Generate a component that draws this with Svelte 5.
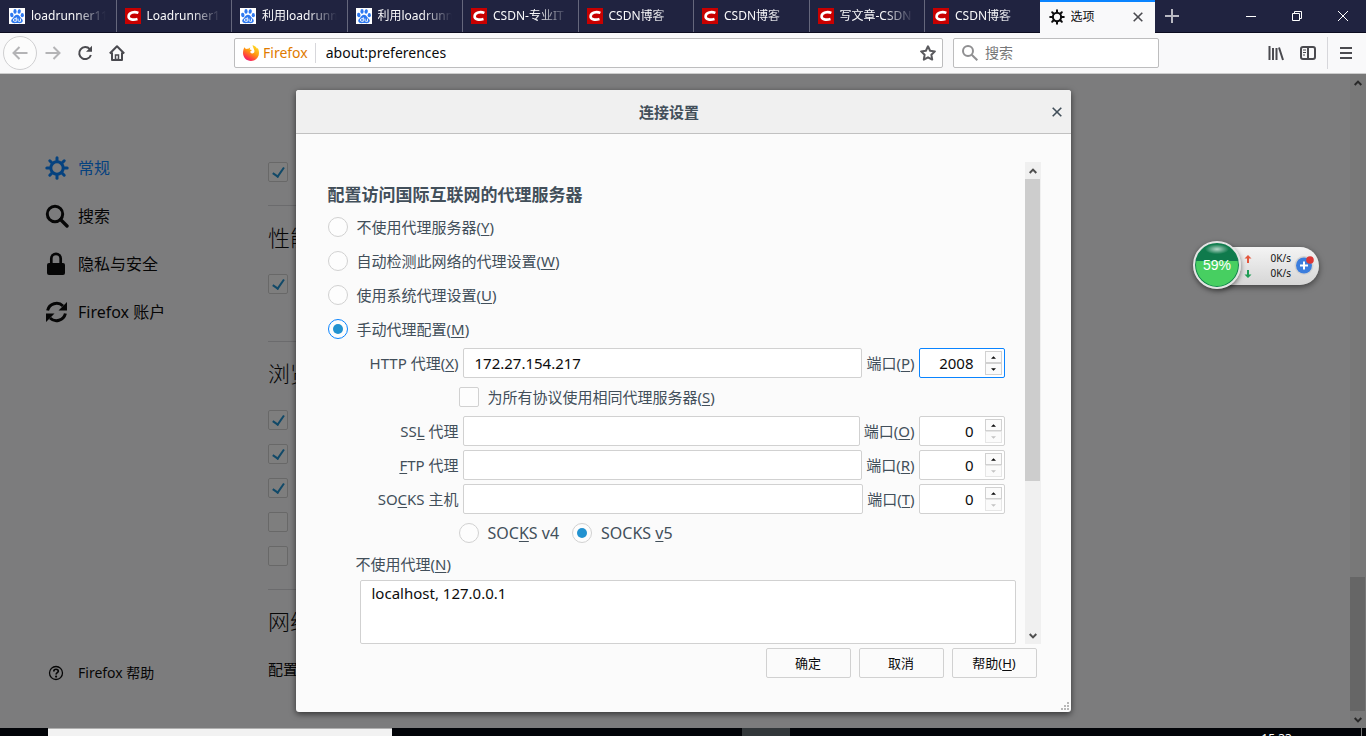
<script lang="ts">
    let tabs = $state([
        { icon: 'baidu', title: 'loadrunner11' },
        { icon: 'csdn', title: 'Loadrunner11' },
        { icon: 'baidu', title: '利用loadrunner' },
        { icon: 'baidu', title: '利用loadrunner' },
        { icon: 'csdn', title: 'CSDN-专业IT' },
        { icon: 'csdn', title: 'CSDN博客' },
        { icon: 'csdn', title: 'CSDN博客' },
        { icon: 'csdn', title: '写文章-CSDN' },
        { icon: 'csdn', title: 'CSDN博客' },
        { icon: 'gear', title: '选项' }
    ])
    let activeTab = $state(9)

    const nav = [
        { icon: 'gear', label: '常规' },
        { icon: 'search', label: '搜索' },
        { icon: 'lock', label: '隐私与安全' },
        { icon: 'sync', label: 'Firefox 账户' }
    ]

    const modes = [
        { id: 'none', label: '不使用代理服务器', key: 'Y' },
        { id: 'auto', label: '自动检测此网络的代理设置', key: 'W' },
        { id: 'system', label: '使用系统代理设置', key: 'U' },
        { id: 'manual', label: '手动代理配置', key: 'M' }
    ]
    let mode = $state('manual')

    let http = $state({ id: 'http', pre: 'HTTP 代理(', key: 'X', post: ')', portKey: 'P', host: '172.27.154.217', port: 2008 })
    let others = $state([
        { id: 'ssl', pre: 'SS', key: 'L', post: ' 代理', portKey: 'O', host: '', port: 0 },
        { id: 'ftp', pre: '', key: 'F', post: 'TP 代理', portKey: 'R', host: '', port: 0 },
        { id: 'socks', pre: 'SO', key: 'C', post: 'KS 主机', portKey: 'T', host: '', port: 0 }
    ])
    let shareProxy = $state(false)
    let socksVersion = $state('5')
    let noProxy = $state('localhost, 127.0.0.1')
    let browsing = $state([true, true, true, false, false])
</script>

{#snippet gear()}
    <svg class="gear" viewBox="0 0 24 24" aria-hidden="true">
        <circle cx="12" cy="12" r="6.2" fill="none" stroke="currentColor" stroke-width="3" />
        {#each [0, 45, 90, 135, 180, 225, 270, 315] as angle}
            <path d="M12 1.8V5" transform="rotate({angle} 12 12)" stroke="currentColor" stroke-width="3" stroke-linecap="round" />
        {/each}
    </svg>
{/snippet}

{#snippet favicon(icon)}
    {#if icon === 'baidu'}
        <svg class="favicon" viewBox="0 0 16 16" aria-hidden="true">
            <rect width="16" height="16" fill="#fff" />
            <g fill="#2d78f0">
                <ellipse cx="2.8" cy="7" rx="1.7" ry="2.2" transform="rotate(-12 2.8 7)" />
                <ellipse cx="6" cy="3.4" rx="1.6" ry="2.3" />
                <ellipse cx="10.2" cy="3.5" rx="1.6" ry="2.3" transform="rotate(10 10.2 3.5)" />
                <ellipse cx="13.3" cy="7.2" rx="1.6" ry="2.1" />
                <path d="M8 6.8c2 0 2.6 1.8 4 3.1 1.500 1.300 2.100 2.300 1.600 3.700-.6 1.800-2.600 1.700-5.600 1.400-3 .3-5 .4-5.600-1.400-.5-1.400.1-2.400 1.600-3.700C5.400 8.600 6 6.800 8 6.800z" />
            </g>
            <path d="M7.300 9.300v4H5.700a1.200 1.200 0 0 1 0-2.600h1.600M9 10.600v1.700q0 1 1 1h1.500v-2.700" fill="none" stroke="#fff" stroke-width=".9" />
        </svg>
    {:else if icon === 'csdn'}
        <svg class="favicon" viewBox="0 0 16 16" aria-hidden="true">
            <rect width="16" height="16" fill="#c80000" />
            <path d="M13.400 4.900C9.500 3.400 4 4.200 3.600 8.100c-.3 3.700 4.800 4.100 8.900 2.900" fill="none" stroke="#fff" stroke-width="2.600" />
        </svg>
    {:else}
        <span class="favicon">{@render gear()}</span>
    {/if}
{/snippet}

{#snippet chevron(down)}
    <svg class="chevron" viewBox="0 0 8 6" aria-hidden="true">
        <path d={down ? 'M.7 1 4 4.400 7.300 1' : 'M.7 5 4 1.600 7.300 5'} fill="none" stroke="currentColor" stroke-width="2" />
    </svg>
{/snippet}

{#snippet proxyRow(row)}
    <div class="row">
        <label class="host-label" for={row.id}>{row.pre}<u>{row.key}</u>{row.post}</label>
        <input class="host" id={row.id} type="text" bind:value={row.host} />
        <label for="{row.id}-port">端口(<u>{row.portKey}</u>)</label>
        <div class="spin" class:focused={row.id === 'http'}>
            <input id="{row.id}-port" type="number" min="0" bind:value={row.port} />
            <div class="steps">
                <button aria-label="+" onclick={() => row.port++}>
                    <svg viewBox="0 0 6 3"><path d="M0 3 3 0l3 3z" /></svg>
                </button>
                <button aria-label="-" disabled={row.port === 0} onclick={() => row.port--}>
                    <svg viewBox="0 0 6 3"><path d="M0 0l3 3 3-3z" /></svg>
                </button>
            </div>
        </div>
    </div>
{/snippet}

<div class="window">
    <header class="tabbar">
        <div class="tabs">
            {#each tabs as tab, i}
                <button class="tab" class:active={i === activeTab} onclick={() => (activeTab = i)}>
                    {@render favicon(tab.icon)}
                    <span class="title">{tab.title}</span>
                    {#if i === activeTab}
                        <svg class="tab-close" viewBox="0 0 10 10" aria-hidden="true"><path d="M.7.7l8.600 8.600M9.300.7L.7 9.300" /></svg>
                    {/if}
                </button>
            {/each}
        </div>
        <button class="new-tab" aria-label="新建标签页">
            <svg width="14" height="14" viewBox="0 0 14 14"><path d="M7 0v14M0 7h14" stroke="#b9b9c2" stroke-width="2" /></svg>
        </button>
        <div class="controls">
            <button aria-label="最小化">
                <svg width="10" height="10" viewBox="0 0 10 10"><path d="M0 5.500h10" /></svg>
            </button>
            <button aria-label="还原">
                <svg width="10" height="10" viewBox="0 0 10 10"><path d="M.5 2.500h7v7h-7zM2.500 2.500v-2h7v7h-2" /></svg>
            </button>
            <button aria-label="关闭">
                <svg width="10" height="10" viewBox="0 0 10 10"><path d="M0 0l10 10M10 0L0 10" /></svg>
            </button>
        </div>
    </header>

    <div class="toolbar">
        <button class="tool back" aria-label="后退" disabled>
            <svg viewBox="0 0 16 16"><path d="M15.500 8H1.500M7.500 2l-6 6 6 6" /></svg>
        </button>
        <button class="tool" aria-label="前进" disabled>
            <svg viewBox="0 0 16 16"><path d="M.5 8h14M8.500 2l6 6-6 6" /></svg>
        </button>
        <button class="tool" aria-label="刷新">
            <svg viewBox="0 0 16 16"><path d="M12.800 4.200A6 6 0 1 0 13.900 10" /><path d="M15 .8v6H9z" fill="currentColor" stroke="none" /></svg>
        </button>
        <button class="tool" aria-label="主页">
            <svg viewBox="0 0 16 16">
                <path d="M.8 8.500 8 1.300l7.200 7.200M3 7.500V15h10V7.500" stroke-linejoin="round" />
                <path d="M6.500 14.500V10h3v4.500z" stroke-width="1.500" />
            </svg>
        </button>

        <div class="urlbar">
            <svg class="fox" viewBox="0 0 16 16" aria-hidden="true">
                <defs>
                    <linearGradient id="fire" x1=".8" y1="0" x2=".2" y2="1">
                        <stop offset="0" stop-color="#ffe226" />
                        <stop offset=".45" stop-color="#ff980e" />
                        <stop offset=".8" stop-color="#ff3647" />
                        <stop offset="1" stop-color="#e31587" />
                    </linearGradient>
                </defs>
                <path d="M1.500 2.200 3 4.200c.8-.4 1.600-.4 2.200-.2.6-1 1.600-1.400 2.300-1.500-.6.500-.9 1.300-.7 1.900l1.900.5c.1.800-1 1.200-1.500 1.600 0 1.200.9 1.900 2 1.900 1.700 0 2.600-1.400 2.100-3.200C10.900 3.500 9.800 2 9.500.2c2.400.6 3.800 2 4.500 3.500l.6-.6C15.600 4.500 16 6.200 16 8c0 4.400-3.500 8-8 8s-8-3.600-8-8c0-2.300.6-4.300 1.500-5.800z" fill="url(#fire)" />
            </svg>
            <span class="identity">Firefox</span>
            <input type="text" aria-label="网址" value="about:preferences" />
            <button class="star" aria-label="收藏">
                <svg viewBox="0 0 16 16"><path d="M8 1.300l2.100 4.400 4.800.7-3.500 3.400.8 4.800L8 12.300l-4.200 2.300.8-4.800L1.100 6.400l4.800-.7z" stroke-linejoin="round" /></svg>
            </button>
        </div>

        <div class="searchbar">
            <svg viewBox="0 0 16 16" aria-hidden="true"><circle cx="6" cy="6" r="5" /><path d="M9.700 9.700l5.600 5.600" /></svg>
            <input type="search" aria-label="搜索" placeholder="搜索" />
        </div>

        <div class="right-tools">
            <button class="tool" aria-label="我的足迹">
                <svg viewBox="0 0 16 16"><path d="M1.500 1v14M5 3v12M8.500 3v12M11 2.500 15 15" /></svg>
            </button>
            <button class="tool" aria-label="侧栏">
                <svg viewBox="0 0 16 16"><rect x="1" y="2" width="14" height="12" rx="2" /><path d="M8 2v12" /><path d="M3 5h3M3 7.500h3M3 10h2" stroke-width="1" /></svg>
            </button>
            <button class="tool menu" aria-label="菜单">
                <svg viewBox="0 0 16 16"><path d="M2 3h12M2 8h12M2 13h12" /></svg>
            </button>
        </div>
    </div>

    <div class="page">
        <nav class="sidebar">
            {#each nav as item, i}
                <a href="#{item.icon}" class:selected={i === 0}>
                    <span class="nav-icon">
                        {#if item.icon === 'gear'}
                            {@render gear()}
                        {:else if item.icon === 'search'}
                            <svg viewBox="0 0 24 24"><circle cx="10" cy="10" r="7.700" fill="none" stroke="currentColor" stroke-width="3" /><path d="M15.500 15.500l6.500 6.500" stroke="currentColor" stroke-width="3.400" stroke-linecap="round" /></svg>
                        {:else if item.icon === 'lock'}
                            <svg viewBox="0 0 24 24"><rect x="2" y="11" width="18" height="12" rx="2" /><path d="M6.300 12V6.500a4.700 4.700 0 0 1 9.400 0V12" fill="none" stroke="currentColor" stroke-width="2.700" /></svg>
                        {:else}
                            <svg viewBox="0 0 24 24">
                                <path d="M2.600 10.500A9.200 9.200 0 0 1 18 6M20.400 13.500A9.200 9.200 0 0 1 5 18" fill="none" stroke="currentColor" stroke-width="3" />
                                <path d="M22 2v8.500h-8.500zM1 22v-8.500h8.500z" />
                            </svg>
                        {/if}
                    </span>
                    {item.label}
                </a>
            {/each}
            <a href="#help" class="help">
                <span class="nav-icon">
                    <svg viewBox="0 0 24 24">
                        <circle cx="11" cy="12" r="6.500" fill="none" stroke="currentColor" stroke-width="1.300" />
                        <path d="M8.800 10.500c0-3 4.500-2.900 4.500-.3 0 1.500-2.200 1.500-2.200 3.300" fill="none" stroke="currentColor" stroke-width="1.700" />
                        <circle cx="11.100" cy="15.600" r="1.100" />
                    </svg>
                </span>
                Firefox 帮助
            </a>
        </nav>

        <main class="prefs">
            <section>
                <input type="checkbox" aria-label="常规" checked />
            </section>
            <section>
                <h2>性能</h2>
                <input type="checkbox" aria-label="性能" checked />
            </section>
            <section>
                <h2>浏览</h2>
                {#each browsing as _, i}
                    <input type="checkbox" aria-label="浏览" bind:checked={browsing[i]} />
                {/each}
            </section>
            <section>
                <h2>网络</h2>
                <p>配置</p>
            </section>
        </main>

        <div class="scrollbar">
            <span class="arrow">{@render chevron(false)}</span>
            <span class="thumb low"></span>
            <span class="arrow">{@render chevron(true)}</span>
        </div>

        <div class="overlay">
            <div class="dialog" role="dialog" aria-labelledby="dialog-title">
                <div class="titlebar">
                    <h1 id="dialog-title">连接设置</h1>
                    <button class="close" aria-label="关闭">
                        <svg width="10" height="10" viewBox="0 0 10 10"><path d="M.7.7l8.600 8.600M9.300.7L.7 9.300" stroke="currentColor" stroke-width="1.600" /></svg>
                    </button>
                </div>

                <div class="body">
                    <div class="scrollbox">
                        <div class="form">
                            <h3>配置访问国际互联网的代理服务器</h3>
                            {#each modes as item}
                                <label class="choice">
                                    <input type="radio" name="mode" value={item.id} bind:group={mode} class:ring={item.id === 'manual'} />
                                    <span>{item.label}(<u>{item.key}</u>)</span>
                                </label>
                            {/each}

                            <div class="manual">
                                {@render proxyRow(http)}
                                <div class="row indent">
                                    <label class="choice">
                                        <input type="checkbox" bind:checked={shareProxy} />
                                        <span>为所有协议使用相同代理服务器(<u>S</u>)</span>
                                    </label>
                                </div>
                                {#each others as row}
                                    {@render proxyRow(row)}
                                {/each}
                                <div class="row indent versions">
                                    <label class="choice">
                                        <input type="radio" name="socks" value="4" bind:group={socksVersion} />
                                        <span>SOC<u>K</u>S v4</span>
                                    </label>
                                    <label class="choice">
                                        <input type="radio" name="socks" value="5" bind:group={socksVersion} />
                                        <span>SOCKS <u>v</u>5</span>
                                    </label>
                                </div>
                                <label class="no-proxy" for="no-proxy">不使用代理(<u>N</u>)</label>
                                <textarea id="no-proxy" bind:value={noProxy}></textarea>
                            </div>
                        </div>
                        <div class="scrollbar">
                            <span class="arrow">{@render chevron(false)}</span>
                            <span class="thumb high"></span>
                            <span class="arrow">{@render chevron(true)}</span>
                        </div>
                    </div>
                    <div class="actions">
                        <button>确定</button>
                        <button>取消</button>
                        <button>帮助(<u>H</u>)</button>
                    </div>
                </div>
                <svg class="resizer" width="8" height="8" viewBox="0 0 8 8" aria-hidden="true">
                    <path d="M6 0h2v2H6zM3 3h2v2H3zM6 3h2v2H6zM0 6h2v2H0zM3 6h2v2H3zM6 6h2v2H6z" fill="#b8b8b8" />
                </svg>
            </div>
        </div>
    </div>

    <footer class="taskbar">
        <span class="task-search"></span>
        <span class="task-app"></span>
        <time>15:33</time>
        <span class="show-desktop"></span>
    </footer>

    <div class="meter">
        <div class="speeds">
            <span><svg viewBox="0 0 8 8"><path d="M4 0l3.500 3.500H5V8H3V3.500H.5z" fill="#e4573d" /></svg>0K/s</span>
            <span><svg viewBox="0 0 8 8"><path d="M4 8L.5 4.500H3V0h2v4.500h2.500z" fill="#1f9d55" /></svg>0K/s</span>
        </div>
        <svg class="plus" viewBox="0 0 20 20" aria-hidden="true">
            <circle cx="10" cy="10.500" r="9.500" fill="#d2d2d2" />
            <circle cx="10" cy="10.500" r="8" fill="#3b7ddd" />
            <path d="M10 6.500v8M6 10.500h8" stroke="#fff" stroke-width="2" />
            <circle cx="16" cy="5" r="3.800" fill="#dd3535" />
        </svg>
        <div class="ball">59%</div>
    </div>
</div>

<style>
    :global(body) {
        overflow: hidden;
    }

    .window {
        position: relative;
        display: flex;
        flex-direction: column;
        height: 100vh;
        overflow: hidden;
        font-family: "Noto Sans", "Noto Sans CJK SC", sans-serif;
        font-size: 15px;
        line-height: 20px;
        color: #0c0c0d;
    }

    .window * {
        box-sizing: border-box;
    }

    button,
    input,
    textarea {
        margin: 0;
        padding: 0;
        border: 0;
        background: none;
        font: inherit;
        color: inherit;
        outline: none;
    }

    svg {
        display: block;
        fill: currentColor;
    }

    u {
        text-underline-offset: 2px;
    }

    /* tabs */
    .tabbar {
        display: flex;
        flex: none;
        height: 33px;
        background: #202340;
        border-bottom: 1px solid #0c0c20;
    }

    .tabs {
        display: flex;
        flex: 1;
        min-width: 0;
    }

    .tab {
        display: flex;
        flex: 1 1 0;
        align-items: center;
        gap: 6px;
        min-width: 0;
        padding: 0 10px 0 8px;
        border-left: 1px solid #65677c;
        color: #f9f9fa;
        font-size: 12px;
        text-align: left;
    }

    .tab:first-child {
        border-left-color: transparent;
    }

    .tab.active {
        height: 33px;
        border-left: 0;
        border-top: 2px solid #0a84ff;
        padding-left: 9px;
        padding-bottom: 2px;
        background: #f9f9fa;
        color: #0c0c0d;
    }

    .favicon {
        flex: none;
        width: 16px;
        height: 16px;
    }

    .gear {
        width: 100%;
        height: 100%;
    }

    .title {
        flex: 1;
        overflow: hidden;
        white-space: nowrap;
        mask-image: linear-gradient(to left, transparent, #000 30px);
    }

    .tab.active .title {
        mask-image: none;
    }

    .tab-close {
        width: 10px;
        height: 10px;
        margin-right: 2px;
        stroke: #4a4a4f;
        stroke-width: 1.6;
    }

    .new-tab {
        display: grid;
        place-items: center;
        width: 33px;
        margin-right: 40px;
    }

    .controls {
        display: flex;
    }

    .controls button {
        display: grid;
        place-items: center;
        width: 46px;
    }

    .controls svg {
        fill: none;
        stroke: #fff;
    }

    /* toolbar */
    .toolbar {
        display: flex;
        flex: none;
        align-items: center;
        height: 41px;
        padding: 0 3px;
        background: #f9f9fa;
        border-bottom: 1px solid #ccc;
    }

    .tool {
        display: grid;
        place-items: center;
        flex: none;
        width: 32px;
        height: 32px;
        color: #4a4a4f;
    }

    .tool svg,
    .star svg,
    .searchbar svg {
        flex: none;
        width: 16px;
        height: 16px;
        fill: none;
        stroke: currentColor;
        stroke-width: 2;
    }

    .tool:disabled {
        color: #b4b4b6;
    }

    .tool.back {
        width: 34px;
        height: 34px;
        border: 1px solid #cfcfd1;
        border-radius: 50%;
        background: #fcfcfc;
    }

    .urlbar,
    .searchbar {
        display: flex;
        align-items: center;
        height: 30px;
        padding: 0 8px;
        border: 1px solid #bdbdbe;
        border-radius: 2px;
        background: #fff;
    }

    .urlbar {
        flex: 1;
        margin: 0 10px 0 101px;
        padding-right: 6px;
    }

    .fox {
        width: 16px;
        height: 16px;
    }

    .identity {
        padding: 0 7px 0 4px;
        border-right: 1px solid #d7d7db;
        color: #e07b00;
        font-size: 14px;
    }

    .urlbar input {
        flex: 1;
        min-width: 0;
        padding-left: 10px;
        font-size: 14px;
    }

    .star {
        color: #5a5a5e;
    }

    .searchbar {
        width: 206px;
        gap: 7px;
        color: #8f8f91;
    }

    .searchbar input {
        width: 100%;
        min-width: 0;
        font-size: 14px;
    }

    .searchbar input::placeholder {
        color: #767678;
    }

    .right-tools {
        display: flex;
        margin-left: 101px;
    }

    .menu {
        margin-left: 3px;
        width: 36px;
        padding-left: 1px;
        border-left: 1px solid #d7d7db;
    }

    /* preferences page */
    .page {
        position: relative;
        display: flex;
        flex: 1;
        min-height: 0;
        background: #f9f9fa;
    }

    .sidebar {
        display: flex;
        flex-direction: column;
        width: 268px;
        padding: 70px 0 31px 45px;
    }

    .sidebar a {
        display: flex;
        align-items: center;
        gap: 9px;
        height: 48px;
        color: #0c0c0d;
        font-size: 16px;
        text-decoration: none;
    }

    .sidebar a.selected {
        color: #0a84ff;
    }

    .sidebar .help {
        margin-top: auto;
        font-size: 14px;
    }

    .nav-icon {
        width: 24px;
        height: 24px;
    }

    .prefs {
        flex: 1;
        min-width: 0;
        padding-top: 88px;
        overflow: hidden;
    }

    .prefs section {
        display: flex;
        flex-direction: column;
        gap: 14px;
        max-width: 664px;
        padding-bottom: 23px;
    }

    .prefs section + section {
        padding-bottom: 47px;
        border-top: 1px solid #d7d7db;
    }

    .prefs section:nth-child(3) {
        padding-bottom: 23px;
    }

    .prefs h2 {
        margin: 16px 0 8px;
        font-size: 22px;
        font-weight: 300;
        line-height: 30px;
    }

    .prefs p {
        margin: 0;
        line-height: 22px;
    }

    input[type="checkbox"],
    input[type="radio"] {
        appearance: none;
        flex: none;
        display: grid;
        place-items: center;
        width: 20px;
        height: 20px;
        border: 1px solid #d1d1d1;
        border-radius: 2px;
        background: #fdfdfd;
    }

    input[type="radio"] {
        border-radius: 50%;
    }

    input[type="checkbox"]:checked::before {
        content: "";
        width: 5px;
        height: 10px;
        margin-bottom: 3px;
        border: solid #2292d0;
        border-width: 0 2px 2px 0;
        transform: rotate(35deg);
    }

    input[type="radio"]:checked::before {
        content: "";
        width: 10px;
        height: 10px;
        border-radius: 50%;
        background: #2292d0;
    }

    input.ring:checked {
        border-color: #0a84ff;
    }

    .scrollbar {
        display: flex;
        flex: none;
        flex-direction: column;
        width: 16px;
        background: #f0f0f0;
    }

    .arrow {
        display: grid;
        place-items: center;
        height: 17px;
        color: #505050;
    }

    .chevron {
        width: 8px;
        height: 6px;
    }

    .thumb {
        width: 15px;
        background: #cdcdcd;
    }

    .thumb.low {
        height: 134px;
        margin-top: auto;
    }

    .thumb.high {
        height: 302px;
        margin-bottom: auto;
    }

    /* connection dialog */
    .overlay {
        position: absolute;
        inset: 0;
        display: flex;
        justify-content: center;
        padding: 16px;
        background: rgba(0, 0, 0, 0.5);
    }

    .dialog {
        position: relative;
        display: flex;
        flex-direction: column;
        width: 100%;
        max-width: 775px;
        border-radius: 3px;
        background: #fbfbfb;
        box-shadow: 0 2px 6px rgba(0, 0, 0, 0.6);
        color: #424f5a;
        overflow: hidden;
    }

    .titlebar {
        display: flex;
        align-items: center;
        height: 44px;
        background: #f0f0f0;
        border-bottom: 1px solid #c1c1c1;
    }

    .titlebar h1 {
        flex: 1;
        margin: 0;
        font-size: 15px;
        font-weight: 600;
        text-align: center;
    }

    .close {
        display: grid;
        place-items: center;
        width: 28px;
        height: 28px;
    }

    .body {
        display: flex;
        flex: 1;
        flex-direction: column;
        min-height: 0;
        padding: 28px 30px 34px 32px;
    }

    .scrollbox {
        display: flex;
        flex: 1;
        gap: 9px;
        min-height: 0;
    }

    .form {
        flex: 1;
        min-width: 0;
    }

    .form h3 {
        margin: 20px 0 8px;
        font-size: 17px;
        font-weight: 700;
        line-height: 26px;
        height: 20px;
    }

    .choice {
        display: flex;
        align-items: center;
        gap: 9px;
        height: 34px;
    }

    .manual {
        margin-left: 28px;
    }

    .row {
        display: flex;
        align-items: center;
        gap: 4px;
        height: 34px;
        padding-right: 11px;
    }

    .row.indent {
        gap: 13px;
        padding-left: 103px;
    }

    .versions {
        font-size: 16px;
    }

    .host-label {
        width: 103px;
        text-align: right;
        white-space: nowrap;
    }

    .host,
    .spin,
    textarea {
        border: 1px solid #d1d1d1;
        border-radius: 2px;
        background: #fff;
        color: #0c0c0d;
    }

    .host {
        flex: 1;
        min-width: 0;
        height: 30px;
        padding: 0 11px;
    }

    .spin {
        display: flex;
        align-items: center;
        width: 86px;
        height: 30px;
        padding-right: 2px;
    }

    .spin.focused {
        border-color: #0a84ff;
    }

    .spin input {
        appearance: textfield;
        flex: 1;
        min-width: 0;
        padding-right: 11px;
        text-align: right;
    }

    .spin input::-webkit-inner-spin-button {
        appearance: none;
    }

    .steps {
        display: flex;
        flex-direction: column;
        width: 17px;
    }

    .steps button {
        display: grid;
        place-items: center;
        height: 12px;
        border: 1px solid #d1d1d1;
        background: #fbfbfb;
    }

    .steps button:disabled {
        border-color: #e6e6e6;
        color: #c4c4c4;
    }

    .steps svg {
        width: 5px;
        height: 3px;
    }

    .no-proxy {
        display: block;
        height: 30px;
        line-height: 28px;
    }

    textarea {
        display: block;
        width: calc(100% - 4px);
        height: 64px;
        margin-left: 4px;
        padding: 2px 11px;
        resize: none;
    }

    .actions {
        display: flex;
        justify-content: flex-end;
        gap: 8px;
        padding: 4px 4px 0 0;
    }

    .actions button {
        width: 85px;
        height: 30px;
        border: 1px solid #d1d1d1;
        border-radius: 2px;
        color: #0c0c0d;
        font-size: 13px;
    }

    .resizer {
        position: absolute;
        right: 2px;
        bottom: 2px;
    }

    /* taskbar */
    .taskbar {
        display: flex;
        flex: none;
        height: 8px;
        padding-left: 48px;
        background: #020408;
        overflow: hidden;
    }

    .task-search {
        width: 344px;
        margin-right: 350px;
        border-top: 1px solid #b0b0b0;
        background: #f2f2f2;
    }

    .task-app {
        width: 48px;
        background: #32373a;
    }

    .taskbar time {
        margin: 1px 69px 0 auto;
        color: #fff;
        font-size: 12px;
    }

    .show-desktop {
        width: 5px;
        border-left: 1px solid #777;
    }

    /* floating network meter */
    .meter {
        position: absolute;
        top: 241px;
        right: 47px;
        display: flex;
        align-items: center;
        width: 126px;
        height: 48px;
    }

    .speeds {
        flex: 1;
        margin: 2px 0 0 24px;
        padding: 4px 28px 4px 27px;
        border-radius: 0 20px 20px 0;
        background: linear-gradient(#f4f4f4, #d6d6d6);
        box-shadow: 0 2px 6px rgba(0, 0, 0, 0.5);
        color: #111;
        font-size: 10px;
        line-height: 15px;
    }

    .speeds span {
        display: flex;
        align-items: center;
        justify-content: space-between;
    }

    .speeds svg {
        width: 8px;
        height: 8px;
    }

    .plus {
        position: absolute;
        right: 5px;
        width: 20px;
        height: 20px;
    }

    .ball {
        position: absolute;
        left: 0;
        display: grid;
        place-items: center;
        width: 48px;
        height: 48px;
        border: 2px solid #e4e4e4;
        border-radius: 50%;
        background:
            radial-gradient(ellipse 12px 5px at 50% 14%, rgba(255, 255, 255, 0.7), transparent),
            linear-gradient(#0f7a4c 0 42%, #47cf61 42%);
        box-shadow: inset 0 0 0 1px #128050, 0 2px 5px rgba(0, 0, 0, 0.5);
        color: #fff;
        font-family: "Liberation Sans", sans-serif;
        font-size: 14px;
    }
</style>
